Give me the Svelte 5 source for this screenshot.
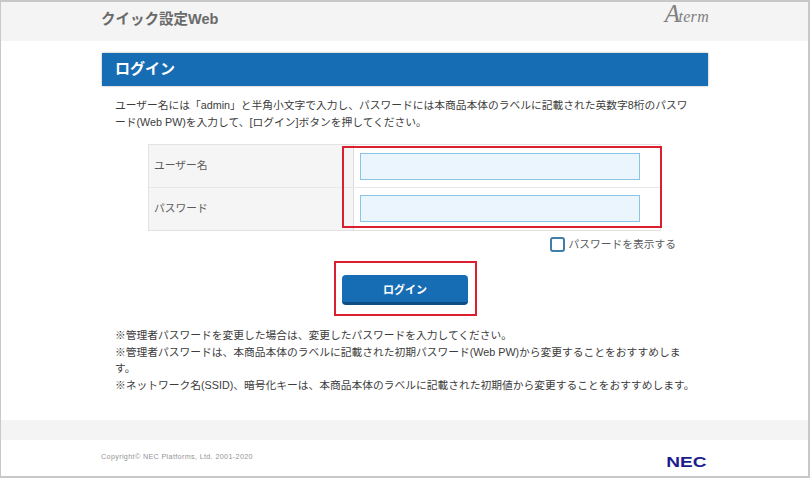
<script lang="ts">
	const rows = [
		{ label: 'ユーザー名', type: 'text' },
		{ label: 'パスワード', type: 'password' }
	];

	const notes = [
		'※管理者パスワードを変更した場合は、変更したパスワードを入力してください。',
		'※管理者パスワードは、本商品本体のラベルに記載された初期パスワード(Web PW)から変更することをおすすめします。',
		'※ネットワーク名(SSID)、暗号化キーは、本商品本体のラベルに記載された初期値から変更することをおすすめします。'
	];
</script>

<div class="page">
	<header class="top">
		<div class="inner top-row">
			<span class="title">クイック設定Web</span>
			<span class="aterm"><span class="cap">A</span>term</span>
		</div>
	</header>

	<main class="inner">
		<h1 class="heading">ログイン</h1>

		<div class="body">
			<p class="lead">
				ユーザー名には「admin」と半角小文字で入力し、パスワードには本商品本体のラベルに記載された英数字8桁のパスワード(Web PW)を入力して、[ログイン]ボタンを押してください。
			</p>

			<div class="form-wrap">
				<div class="table">
					{#each rows as row}
						<div class="row">
							<div class="label">{row.label}</div>
							<div class="cell"><input class="field" type={row.type} /></div>
						</div>
					{/each}
					<div class="mark mark-fields"></div>
				</div>

				<label class="show">
					<span class="check"></span>
					<span>パスワードを表示する</span>
				</label>
			</div>

			<div class="actions">
				<div class="button-mark">
					<button class="login" type="button">ログイン</button>
				</div>
			</div>

			<div class="notes">
				{#each notes as note}
					<p>{note}</p>
				{/each}
			</div>
		</div>
	</main>

	<div class="band"></div>

	<footer class="inner foot">
		<span class="copy">Copyright© NEC Platforms, Ltd. 2001-2020</span>
		<span class="nec">NEC</span>
	</footer>
</div>

<style>
	:global(body) {
		margin: 0;
		background: #fff;
	}

	.page {
		box-sizing: border-box;
		width: 810px;
		height: 478px;
		border: 1px solid #c8c8c8;
		border-width: 2px 2px 2px 1px;
		font-family: 'Liberation Sans', 'Noto Sans CJK JP', sans-serif;
		color: #333;
		overflow: hidden;
	}

	.inner {
		width: 607px;
		margin-left: 100px;
	}

	.top {
		height: 39px;
		background: #f4f4f4;
	}

	.top-row {
		display: flex;
		justify-content: space-between;
		align-items: center;
		height: 30px;
	}

	.title {
		font-size: 14.5px;
		font-weight: 700;
		color: #6a6a6a;
	}

	.aterm {
		margin: -6px -1px 0 0;
		font-family: 'Liberation Serif', serif;
		font-style: italic;
		font-size: 16px;
		letter-spacing: 0.3px;
		color: #808080;
	}

	.cap {
		font-size: 25px;
		letter-spacing: -1.5px;
	}

	.heading {
		margin: 12px 0 0 1px;
		height: 33px;
		padding-left: 13px;
		background: #176db3;
		box-shadow: 0 0 2px rgba(0, 0, 0, 0.35);
		color: #fff;
		font-size: 15px;
		font-weight: 700;
		line-height: 31px;
	}

	.body {
		padding: 0 14px;
	}

	.lead {
		margin: 11px 0 0;
		font-size: 10.75px;
		line-height: 17px;
		color: #3c3c3c;
	}

	.form-wrap {
		width: 513px;
		margin: 13px 0 0 33px;
	}

	.table {
		position: relative;
		border: 1px solid #e2e2e2;
	}

	.row {
		display: flex;
		height: 42px;
	}

	.row + .row {
		border-top: 1px solid #e8e8e8;
	}

	.label {
		box-sizing: border-box;
		width: 205px;
		padding-left: 5px;
		background: #f5f5f5;
		border-right: 1px solid #dcdcdc;
		font-size: 10.75px;
		line-height: 40px;
		color: #5a5a5a;
	}

	.cell {
		padding: 8px 0 0 6px;
	}

	.row + .row .cell {
		padding-top: 7px;
	}

	.field {
		display: block;
		box-sizing: border-box;
		width: 280px;
		height: 27px;
		margin: 0;
		padding: 0 4px;
		background: #eaf5fd;
		border: 1px solid #89c6e6;
		border-radius: 0;
	}

	.mark {
		position: absolute;
		box-sizing: border-box;
		border: 2px solid #dc1f2e;
		pointer-events: none;
	}

	.mark-fields {
		left: 193px;
		top: 1px;
		width: 320px;
		height: 82px;
	}

	.show {
		display: flex;
		justify-content: flex-end;
		align-items: center;
		gap: 3px;
		margin: 5px -15px 0 0;
		font-size: 10.75px;
		line-height: 16px;
		color: #5a5a5a;
	}

	.check {
		box-sizing: border-box;
		width: 15px;
		height: 15px;
		border: 2px solid #3f7ea8;
		border-radius: 3px;
		background: #fff;
	}

	.actions {
		display: flex;
		justify-content: center;
		margin-top: 9px;
	}

	.button-mark {
		box-sizing: border-box;
		width: 143px;
		height: 55px;
		padding: 12px 0 0 6px;
		border: 2px solid #dc1f2e;
		margin-left: 2px;
	}

	.login {
		display: block;
		width: 126px;
		height: 30px;
		padding: 0;
		background: #176db3;
		border: 0;
		border-bottom: 3px solid #0f4e83;
		border-radius: 4px;
		color: #fff;
		font-family: inherit;
		font-size: 11px;
		font-weight: 700;
	}

	.notes {
		margin-top: 11px;
		font-size: 10.75px;
		line-height: 16.7px;
		color: #3c3c3c;
	}

	.notes p {
		margin: 0;
	}

	.notes p:last-child {
		white-space: nowrap;
	}

	.band {
		height: 20px;
		margin-top: 26px;
		background: #f4f4f4;
	}

	.foot {
		display: flex;
		justify-content: space-between;
		align-items: center;
		height: 34px;
	}

	.copy {
		font-size: 7.2px;
		color: #949494;
		letter-spacing: 0.35px;
	}

	.nec {
		margin: 10px 1px 0 0;
		font-family: 'Liberation Sans', sans-serif;
		font-size: 14px;
		font-weight: 700;
		color: #1c1c8e;
		transform: scaleX(1.36);
		transform-origin: right center;
	}
</style>
